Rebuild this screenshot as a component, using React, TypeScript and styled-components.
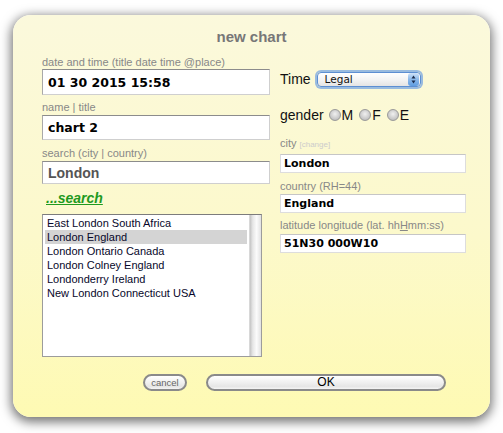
import styled, { createGlobalStyle } from 'styled-components'

const GlobalStyle = createGlobalStyle`
  html, body {
    margin: 0;
    padding: 0;
    background: #ffffff;
  }
  body {
    font-family: "Liberation Sans", Arial, sans-serif;
  }
`

const Page = styled.div`
  width: 503px;
  height: 433px;
  box-sizing: border-box;
  padding: 15px 0 0 13px;
`

const Dialog = styled.div`
  width: 477px;
  height: 402px;
  box-sizing: border-box;
  padding-top: 13px;
  border-radius: 18px;
  background: linear-gradient(to bottom, #fbf9dc 0%, #fcf9cb 55%, #fefab3 100%);
  box-shadow: 0 3px 11px 2px rgba(0, 0, 0, 0.55);
  display: flex;
  flex-direction: column;
`

const Title = styled.h1`
  margin: 0;
  font: bold 15px/18px "Liberation Sans", Arial, sans-serif;
  color: #777777;
  text-align: center;
`

const Columns = styled.div`
  display: grid;
  grid-template-columns: 228px 186px;
  column-gap: 10px;
  margin-top: 9px;
  padding-left: 29px;
  align-items: start;
`

const Column = styled.div`
  display: flex;
  flex-direction: column;
`

const Label = styled.label<{ $top?: number; $bottom?: number }>`
  display: block;
  margin-top: ${(p) => p.$top ?? 0}px;
  margin-bottom: ${(p) => p.$bottom ?? 0}px;
  font-size: 11px;
  line-height: 14px;
  color: #888888;
  white-space: nowrap;
`

const Hint = styled.span`
  font-size: 8px;
  color: #cccccc;
  margin-left: 3px;
`

const BigInput = styled.input<{ $h: number; $muted?: boolean }>`
  display: block;
  width: 228px;
  height: ${(p) => p.$h}px;
  box-sizing: border-box;
  margin: 0;
  padding: 0 0 0 5px;
  border: 1px solid #cfcfcf;
  border-top-color: #8c8c8c;
  border-left-color: #a9a9a9;
  background: #ffffff;
  outline: none;
  font: bold ${(p) => (p.$muted ? '14px "Liberation Sans", Arial' : '12.5px "DejaVu Sans", Verdana')}, sans-serif;
  color: ${(p) => (p.$muted ? '#555555' : '#000000')};
`

const SmallInput = styled.input`
  display: block;
  width: 186px;
  height: 19px;
  box-sizing: border-box;
  margin: 0;
  padding: 0 0 0 3px;
  border: 1px solid #dddddd;
  border-top-color: #c6c6c6;
  background: #ffffff;
  outline: none;
  font: bold 11px "DejaVu Sans", Verdana, sans-serif;
  color: #000000;
`

const SearchLink = styled.a`
  display: block;
  margin-top: 5px;
  padding-left: 4px;
  font: italic bold 14px/18px "Liberation Sans", Arial, sans-serif;
  color: #1f9a1f;
  text-decoration: underline;
  cursor: pointer;
`

const ListBox = styled.div`
  display: flex;
  margin-top: 7px;
  width: 220px;
  height: 143px;
  box-sizing: border-box;
  border: 1px solid #9c9c9c;
  border-top-color: #7c7c7c;
  background: #ffffff;
`

const Items = styled.ul`
  flex: 1;
  margin: 0;
  padding: 1px 2px;
  list-style: none;
`

const Item = styled.li<{ $selected?: boolean }>`
  height: 14px;
  padding-left: 2px;
  font-size: 11px;
  line-height: 14px;
  color: #07072a;
  white-space: nowrap;
  background: ${(p) => (p.$selected ? '#d4d4d4' : 'transparent')};
`

const Scrollbar = styled.div`
  width: 11px;
  background: linear-gradient(to right, #c4c4c4 0%, #e6e6e6 25%, #fbfbfb 60%, #e2e2e2 100%);
  border-left: 1px solid #d8d8d8;
`

const TimeRow = styled.div`
  display: flex;
  align-items: center;
  margin-top: 14px;
  height: 19px;
  font-size: 14px;
  color: #111111;
`

const Select = styled.div`
  position: relative;
  width: 104px;
  height: 15px;
  margin: 2px 0 0 6px;
  box-sizing: border-box;
  border: 1px solid #5d8fd2;
  border-radius: 4px;
  background: linear-gradient(to bottom, #ffffff 0%, #f4f4f4 50%, #e4e4e4 100%);
  box-shadow: 0 0 0 2px rgba(120, 165, 225, 0.75);
  font: 10.5px/13px "DejaVu Sans", Verdana, sans-serif;
  color: #111111;
  padding-left: 7px;
`

const Stepper = styled.span`
  position: absolute;
  right: 1px;
  top: 0;
  width: 11px;
  height: 13px;
  border-radius: 3px;
  background: linear-gradient(to bottom, #cfe2f8 0%, #8ab8ea 50%, #5f9de0 100%);
  display: flex;
  align-items: center;
  justify-content: center;
`

const GenderRow = styled.div`
  display: flex;
  align-items: center;
  margin-top: 18px;
  height: 18px;
  font-size: 14px;
  color: #111111;
`

const Option = styled.span<{ $first?: boolean }>`
  display: inline-flex;
  align-items: center;
  margin-left: ${(p) => (p.$first ? 5 : 6)}px;
`

const Radio = styled.span`
  display: inline-block;
  width: 12px;
  height: 12px;
  box-sizing: border-box;
  margin-right: 1px;
  border-radius: 50%;
  border: 1px solid #9a9a9a;
  background: radial-gradient(circle at 50% 40%, #f0f0f0 0%, #cacaca 60%, #afafaf 100%);
`

const Footer = styled.div`
  display: flex;
  align-items: center;
  gap: 19px;
  margin-top: 17px;
  padding-left: 130px;
`

const PillButton = styled.button<{ $wide?: boolean }>`
  width: ${(p) => (p.$wide ? 240 : 44)}px;
  height: 17px;
  box-sizing: border-box;
  padding: 0;
  border: 2px solid #8a8a8a;
  border-radius: 9px;
  background: linear-gradient(to bottom, #ffffff 0%, #f0f0f0 50%, #e6e6e6 80%, #f4f4f4 100%);
  font: ${(p) => (p.$wide ? '12px' : '9.5px')} "Liberation Sans", Arial, sans-serif;
  color: ${(p) => (p.$wide ? '#000000' : '#666666')};
  line-height: 13px;
  cursor: pointer;
`

const places = [
  'East London South Africa',
  'London England',
  'London Ontario Canada',
  'London Colney England',
  'Londonderry Ireland',
  'New London Connecticut USA',
]

export default function App() {
  return (
    <Page>
      <GlobalStyle />
      <Dialog>
        <Title>new chart</Title>
        <Columns>
          <Column>
            <Label>date and time (title date time @place)</Label>
            <BigInput $h={26} defaultValue="01 30 2015 15:58" />
            <Label $top={5} $bottom={1}>name | title</Label>
            <BigInput $h={25} defaultValue="chart 2" />
            <Label $top={6} $bottom={1}>search (city | country)</Label>
            <BigInput $h={23} $muted defaultValue="London" />
            <SearchLink>...search</SearchLink>
            <ListBox>
              <Items>
                {places.map((p, i) => (
                  <Item key={p} $selected={i === 1}>
                    {p}
                  </Item>
                ))}
              </Items>
              <Scrollbar />
            </ListBox>
          </Column>
          <Column>
            <TimeRow>
              Time
              <Select>
                Legal
                <Stepper>
                  <svg width="5" height="9" viewBox="0 0 5 9">
                    <path d="M2.5 0.5 L4.5 3.5 L0.5 3.5 Z" fill="#1a2a4a" />
                    <path d="M2.5 8.5 L4.5 5.5 L0.5 5.5 Z" fill="#1a2a4a" />
                  </svg>
                </Stepper>
              </Select>
            </TimeRow>
            <GenderRow>
              gender
              <Option $first>
                <Radio />M
              </Option>
              <Option>
                <Radio />F
              </Option>
              <Option>
                <Radio />E
              </Option>
            </GenderRow>
            <Label $top={12} $bottom={2}>
              city<Hint>[change]</Hint>
            </Label>
            <SmallInput defaultValue="London" />
            <Label $top={6} $bottom={1}>country (RH=44)</Label>
            <SmallInput defaultValue="England" />
            <Label $top={5} $bottom={2}>
              latitude longitude (lat. hh<u>H</u>mm:ss)
            </Label>
            <SmallInput defaultValue="51N30 000W10" />
          </Column>
        </Columns>
        <Footer>
          <PillButton>cancel</PillButton>
          <PillButton $wide>OK</PillButton>
        </Footer>
      </Dialog>
    </Page>
  )
}
